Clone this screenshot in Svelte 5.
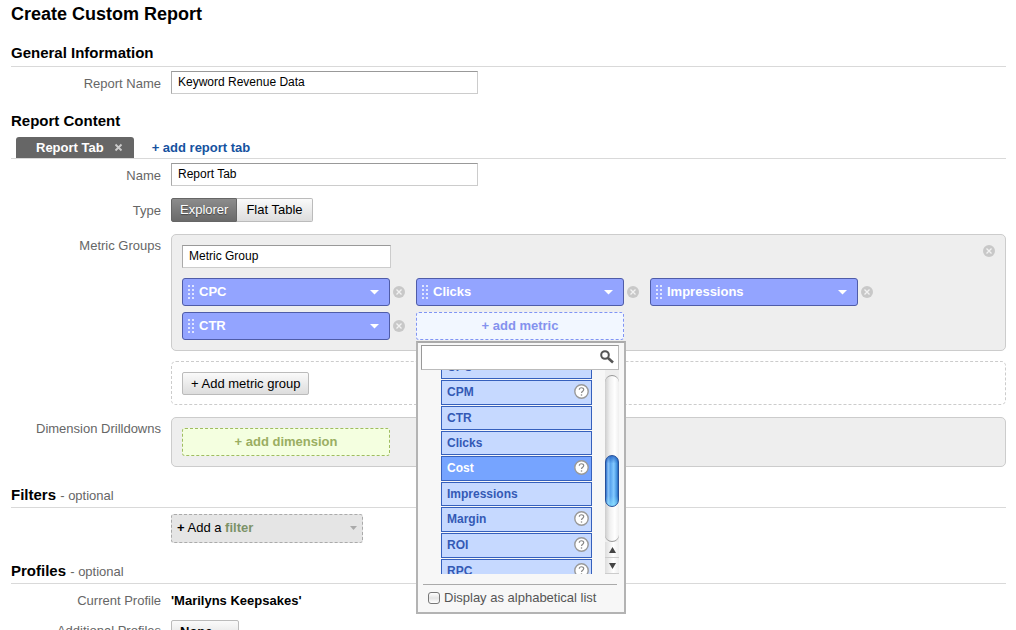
<script>
	let reportName = "Keyword Revenue Data";
	let tabName = "Report Tab";
	let groupName = "Metric Group";
	let type = "Explorer";
	let search = "";
	let alphabetical = false;
	let selected = "Cost";
	let chips = ["CPC", "Clicks", "Impressions", "CTR"];
	const types = ["Explorer", "Flat Table"];
	const metrics = [
		{ name: "CPC" },
		{ name: "CPM", help: true },
		{ name: "CTR" },
		{ name: "Clicks" },
		{ name: "Cost", help: true },
		{ name: "Impressions" },
		{ name: "Margin", help: true },
		{ name: "ROI", help: true },
		{ name: "RPC", help: true }
	];
	const removeChip = (chip) => {
		chips = chips.filter((c) => c !== chip)
	};
</script>

<style>
	:global(html) {
		scrollbar-width: none;
	}
	:global(body) {
		margin: 0;
		background: #fff;
	}
	main {
		padding: 3px 10px 0 11px;
		font-family: "Liberation Sans", Arial, Helvetica, sans-serif;
		font-size: 13px;
		line-height: 16px;
		color: #000;
	}
	button, input, select {
		font: inherit;
		margin: 0;
		box-sizing: border-box;
	}
	button {
		padding: 0;
		cursor: pointer;
	}
	svg {
		display: block;
	}
	h1 {
		margin: 0;
		font-size: 18px;
		line-height: 22px;
	}
	h2 {
		margin: 0;
		font-size: 15px;
		line-height: 20px;
	}
	h2 span {
		font-size: 13px;
		line-height: 16px;
		font-weight: normal;
		color: #666;
	}
	section > h2 {
		padding-bottom: 3px;
		border-bottom: 1px solid #d9d9d9;
	}
	.general {
		padding-top: 18px;
	}
	.content {
		padding-top: 17px;
	}
	.content > h2 {
		padding: 0;
		border: 0;
	}
	.filters, .profiles {
		padding-top: 18px;
	}
	.filters > h2, .profiles > h2 {
		padding-bottom: 2px;
	}
	.row {
		display: grid;
		grid-template-columns: 150px minmax(0, 1fr);
		column-gap: 10px;
		margin-top: 4px;
	}
	.label {
		padding-top: 5px;
		text-align: right;
		color: #666;
	}
	.text {
		width: 307px;
		height: 23px;
		padding: 0 6px 1px;
		border: 1px solid #ccc;
		border-top-color: #999;
		border-left-color: #aaa;
		font-size: 12px;
		background: #fff;
	}

	/* tabs */
	.tabs {
		display: flex;
		margin-top: 6px;
		padding-left: 5px;
		gap: 18px;
		border-bottom: 1px solid #d9d9d9;
		font-weight: bold;
	}
	.tab {
		display: flex;
		align-items: center;
		gap: 10px;
		height: 21px;
		padding: 0 11px 0 20px;
		border-radius: 3px 3px 0 0;
		background: #666;
		color: #fff;
	}
	.tab button {
		border: 0;
		background: none;
	}
	.tabs a {
		line-height: 21px;
		color: #15529f;
		text-decoration: none;
	}

	/* buttons */
	.types {
		display: flex;
	}
	.types button, .plain {
		height: 24px;
		padding: 0 8px;
		border: 1px solid #bbb;
		border-radius: 2px;
		background: linear-gradient(#fafafa, #ddd);
		color: #000;
	}
	.types button {
		padding: 0 9px;
		border-left: 0;
		border-radius: 0 2px 2px 0;
	}
	.types button:first-child {
		padding: 0 8px;
		border-left: 1px solid #666;
		border-radius: 2px 0 0 2px;
	}
	.types button.active {
		border-color: #666;
		background: linear-gradient(#8c8c8c, #6a6a6a);
		color: #fff;
		text-shadow: 0 1px 1px #444;
	}
	.type {
		margin-top: 12px;
	}
	.groups {
		margin-top: 12px;
	}
	.groups .label, .drill .label {
		padding-top: 4px;
	}

	.panel {
		position: relative;
		padding: 10px;
		border: 1px solid #ccc;
		border-radius: 5px;
		background: #eee;
	}
	.panel .text {
		width: 209px;
	}
	.dashed {
		margin-top: 10px;
		padding-bottom: 9px;
		border-style: dashed;
		background: #fff;
	}
	.plain {
		display: block;
	}
	.dashed .plain {
		height: 23px;
	}
	.remove {
		border: 0;
		background: none;
	}
	.corner {
		position: absolute;
		top: 10px;
		right: 10px;
	}
	.chips {
		display: flex;
		flex-wrap: wrap;
		gap: 6px 11px;
		max-width: 720px;
		margin-top: 10px;
	}
	.chip {
		display: flex;
		align-items: center;
		gap: 3px;
	}
	.metric, .add {
		width: 208px;
		height: 28px;
		border-radius: 3px;
		font-weight: bold;
	}
	.metric {
		display: flex;
		align-items: center;
		gap: 4px;
		padding: 0 10px 0 5px;
		border: 1px solid #4f5ca8;
		background: #93a4ff;
		color: #fff;
	}
	.metric span {
		flex: 1;
		text-align: left;
	}
	.add {
		display: block;
		border: 1px dashed #8094f4;
		background: #f2f7ff;
		color: #8492ee;
	}
	.green {
		border-color: #9fbd60;
		background: #f4ffe0;
		color: #9aae62;
	}
	.drill {
		margin-top: 12px;
	}

	/* metric picker */
	.picker {
		position: relative;
	}
	.popup {
		position: absolute;
		z-index: 2;
		top: 29px;
		left: 0;
		box-sizing: border-box;
		width: 210px;
		padding: 2px 4px 6px 3px;
		border: 2px solid #b3b3b3;
		border-top-color: #aaa;
		background: #f7f7f7;
	}
	.search {
		display: flex;
		align-items: center;
		height: 25px;
		margin-right: 1px;
		padding: 0 4px 2px 0;
		box-sizing: border-box;
		border: 1px solid #bbb;
		border-top-color: #999;
		border-left-color: #999;
		background: #fff;
	}
	.search input {
		flex: 1;
		min-width: 0;
		border: 0;
		outline: 0;
		background: none;
	}
	.list {
		display: flex;
		justify-content: space-between;
		height: 204px;
		padding-left: 20px;
		overflow: hidden;
	}
	ul {
		display: flex;
		flex-direction: column;
		gap: 1px;
		width: 151px;
		margin: -15px 0 0;
		padding: 0;
		list-style: none;
	}
	li button {
		display: flex;
		align-items: center;
		justify-content: space-between;
		width: 100%;
		height: 24px;
		padding: 0 2px 0 5px;
		border: 1px solid #3560bd;
		background: #c6d9ff;
		color: #3459b5;
		font-size: 12px;
		font-weight: bold;
	}
	li button.help {
		height: 25px;
		padding-bottom: 1px;
	}
	li button.selected {
		background: #76a4ff;
		color: #fff;
	}
	li svg {
		margin-bottom: 2px;
	}
	.scroll {
		display: flex;
		flex-direction: column;
		width: 14px;
		margin-right: 1px;
		background: #eee;
	}
	.track {
		flex: 1;
		margin-top: 5px;
		padding-top: 79px;
		border-top: 1px solid #999;
		border-bottom: 1px solid #999;
		border-radius: 8px;
		background: linear-gradient(90deg, #ccc, #f0f0f0 35%, #fff 70%, #eee);
	}
	.thumb {
		height: 52px;
		box-sizing: border-box;
		border: 1px solid #27519b;
		border-radius: 7px;
		background:
			linear-gradient(#1652b8aa, transparent 15%, transparent 80%, #8deaff99),
			linear-gradient(90deg, #2d70cc, #8ec4f6 18%, #5aa5ef 38%, #83c9ff 65%, #4292e0 90%, #2767b6);
	}
	.scroll button {
		display: grid;
		place-items: center;
		height: 16px;
		border: 0;
		border-bottom: 1px solid #ccc;
		background: linear-gradient(90deg, #ddd, #fff 60%, #eee);
	}
	.alpha {
		display: flex;
		align-items: center;
		gap: 4px;
		margin: 10px 3px 0 2px;
		padding: 5px 0 0 5px;
		border-top: 1px solid #aaa;
		color: #555;
	}
	.alpha input {
		appearance: none;
		width: 12px;
		height: 12px;
		border: 1px solid #777;
		border-radius: 3px;
		background: linear-gradient(#fff, #e4e4e4 50%, #fff);
	}
	.alpha input:checked {
		background: #4a8de0;
	}

	.filter {
		display: flex;
		align-items: center;
		justify-content: space-between;
		width: 192px;
		height: 29px;
		margin-top: 2px;
		padding: 0 5px 2px;
		border: 1px dashed #aaa;
		border-radius: 3px;
		background: #e5e5e5;
		color: #000;
	}
	.filter em {
		font-style: normal;
		font-weight: bold;
		color: #7c9268;
	}
	.value {
		padding-top: 5px;
		font-weight: bold;
	}
	.additional {
		margin-top: 11px;
	}
	.additional .label {
		padding-top: 3px;
	}
	select.plain {
		appearance: none;
		width: 68px;
		height: 23px;
		font-weight: bold;
	}
</style>

{#snippet cross()}
	<svg width="12" height="12" viewBox="0 0 12 12">
		<circle cx="6" cy="6" r="6" fill="#c8c8c8" />
		<path d="M3.5 3.5l5 5m0-5l-5 5" stroke="#f2f2f2" stroke-width="1.3" />
	</svg>
{/snippet}

<main>
	<h1>Create Custom Report</h1>

	<section class="general">
		<h2>General Information</h2>
		<div class="row">
			<label class="label" for="report-name">Report Name</label>
			<div><input class="text" id="report-name" bind:value={reportName}></div>
		</div>
	</section>

	<section class="content">
		<h2>Report Content</h2>
		<div class="tabs">
			<div class="tab">
				<span>Report Tab</span>
				<button aria-label="Close tab">
					<svg width="9" height="9" viewBox="0 0 9 9">
						<path d="M1.5 1.5l6 6m0-6l-6 6" stroke="#ccc" stroke-width="1.8" />
					</svg>
				</button>
			</div>
			<a href="#add-tab">+ add report tab</a>
		</div>
		<div class="row">
			<label class="label" for="tab-name">Name</label>
			<div><input class="text" id="tab-name" bind:value={tabName}></div>
		</div>
		<div class="row type">
			<span class="label">Type</span>
			<div class="types">
				{#each types as item}
					<button class:active={type === item} on:click={() => type = item}>{item}</button>
				{/each}
			</div>
		</div>
		<div class="row groups">
			<label class="label" for="group-name">Metric Groups</label>
			<div>
				<div class="panel">
					<input class="text" id="group-name" bind:value={groupName}>
					<button class="remove corner" aria-label="Remove group">{@render cross()}</button>
					<div class="chips">
						{#each chips as chip}
							<div class="chip">
								<button class="metric">
									<svg width="7" height="14" viewBox="0 0 7 14" fill="#dfe5ff">
										{#each [0, 4, 8, 12] as y}
											<rect x="0" {y} width="2" height="2" />
											<rect x="4" {y} width="2" height="2" />
										{/each}
									</svg>
									<span>{chip}</span>
									<svg width="9" height="5" viewBox="0 0 9 5"><path d="M0 0h9L4.5 4.5z" fill="#fff" /></svg>
								</button>
								<button class="remove" aria-label="Remove {chip}" on:click={() => removeChip(chip)}>{@render cross()}</button>
							</div>
						{/each}
						<div class="picker">
							<button class="add">+ add metric</button>
							<div class="popup">
								<div class="search">
									<input type="text" aria-label="Search metrics" bind:value={search}>
									<svg width="14" height="14" viewBox="0 0 14 14" fill="none" stroke="#555">
										<circle cx="5" cy="5" r="3.8" stroke-width="2" />
										<path d="M8 8l5 4.5" stroke-width="2.6" />
									</svg>
								</div>
								<div class="list">
									<ul>
										{#each metrics as metric}
											<li>
												<button class:help={metric.help} class:selected={selected === metric.name} on:click={() => selected = metric.name}>
													{metric.name}
													{#if metric.help}
														<svg width="15" height="15" viewBox="0 0 15 15">
															<circle cx="7.5" cy="7.5" r="6.7" fill="#fff" stroke="#999" stroke-width="1.4" />
															<path d="M5.3 5.8C5.3 3 9.8 3.1 9.7 5.7C9.6 7.2 7.6 7.2 7.5 9" fill="none" stroke="#888" stroke-width="1.2" />
															<circle cx="7.5" cy="11" r=".8" fill="#888" />
														</svg>
													{/if}
												</button>
											</li>
										{/each}
									</ul>
									<div class="scroll">
										<div class="track"><div class="thumb"></div></div>
										<button aria-label="Scroll up"><svg width="7" height="6" viewBox="0 0 7 6"><path d="M3.5 0L7 6H0z" fill="#444" /></svg></button>
										<button aria-label="Scroll down"><svg width="7" height="6" viewBox="0 0 7 6"><path d="M0 0h7L3.5 6z" fill="#444" /></svg></button>
									</div>
								</div>
								<label class="alpha">
									<input type="checkbox" bind:checked={alphabetical}>
									Display as alphabetical list
								</label>
							</div>
						</div>
					</div>
				</div>
				<div class="panel dashed">
					<button class="plain">+ Add metric group</button>
				</div>
			</div>
		</div>
		<div class="row drill">
			<span class="label">Dimension Drilldowns</span>
			<div class="panel">
				<button class="add green">+ add dimension</button>
			</div>
		</div>
	</section>

	<section class="filters">
		<h2>Filters <span>- optional</span></h2>
		<div class="row">
			<span></span>
			<button class="filter">
				<span><b>+</b> Add a <em>filter</em></span>
				<svg width="7" height="4" viewBox="0 0 7 4"><path d="M0 0h7L3.5 4z" fill="#aaa" /></svg>
			</button>
		</div>
	</section>

	<section class="profiles">
		<h2>Profiles <span>- optional</span></h2>
		<div class="row">
			<span class="label">Current Profile</span>
			<span class="value">'Marilyns Keepsakes'</span>
		</div>
		<div class="row additional">
			<label class="label" for="profiles">Additional Profiles</label>
			<select class="plain" id="profiles">
				<option>None</option>
			</select>
		</div>
	</section>
</main>
